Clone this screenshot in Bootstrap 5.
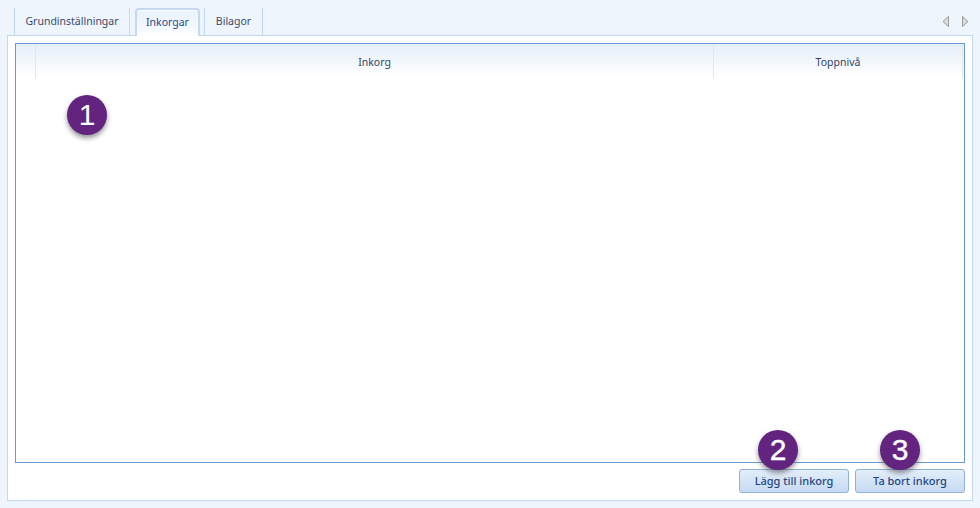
<!doctype html>
<html lang="sv">
<head>
<meta charset="utf-8">
<title>Inkorgar</title>
<link href="https://cdn.jsdelivr.net/npm/bootstrap@5.3.0/dist/css/bootstrap.min.css" rel="stylesheet">
<style>
html,body{height:100%}
body{background:#eef5fd;font-family:"Noto Sans",sans-serif;font-size:11px;color:#2a3a55;overflow:hidden}
.shell{width:980px;height:508px;padding:8px 7px 8px 7px;position:relative}
.tabrow{height:27px;padding-left:7px;padding-right:0;border:0;flex-wrap:nowrap}
.tabrow .nav-link{height:27px;margin:0;padding:0 0 1px;display:flex;align-items:center;justify-content:center;border:0;border-left:1px solid #c3d8f1;border-right:1px solid #c3d8f1;border-radius:0;color:#3a4a6a;background:transparent;font-size:10.5px;line-height:1}
.tabrow .nav-link.active{background:linear-gradient(#fff 0,#eaf2fc 8%,#f3f8fe 70%,#fff 100%);border:2px solid #c3d8f1;border-bottom:0;border-radius:4px 4px 0 0;color:#1f4a8a;position:relative;z-index:2;margin-bottom:-1px;height:28px}
.tab-a{width:116px}
.tab-b{width:65px;margin-left:5px!important}
.tab-c{width:59px;margin-left:4px!important}
.scroller{height:27px;gap:11px;padding-right:4px}
.panel-box{height:466px;background:#fff;border:1px solid #c3d8f1;padding:7px 7px 6px 7px}
.gridbox{height:420px;border:1px solid #6a98d4;background:#fff}
.headcell{height:34px;font-size:10.5px;color:#2f4468;background:linear-gradient(#e6eef9,#fff);padding-top:3px}
.headcell+.headcell{border-left:1px solid #dfe6f0}
.c1{width:19px}
.c2{width:678px}
.c3{width:249px}
.c4{flex:1 1 auto}
.cmd{width:110px;height:24px;padding:0 0 1px;border:1px solid #8fb2d9;border-radius:3px;background:linear-gradient(#e3eefa,#c6daf2);color:#1d4684;font-size:11px;font-weight:500;line-height:1}
.cmd:hover{background:linear-gradient(#e3eefa,#c6daf2);color:#1d4684;border-color:#8fb2d9}
.actions{gap:6px;margin-top:6px}
.pin{position:absolute;width:40px;height:40px;border-radius:50%;background:#62247f;color:#fff;font-family:"Liberation Sans",sans-serif;font-size:30px;line-height:40px;text-align:center;box-shadow:0 3px 5px rgba(60,60,60,.55)}
.pin-1{left:67px;top:95px}
.pin-2{left:758px;top:430px;-webkit-text-stroke:.4px #fff}
.pin-3{left:880px;top:430px;-webkit-text-stroke:.4px #fff}
</style>
</head>
<body>
<div class="shell">
  <div class="d-flex justify-content-between">
    <ul class="nav nav-tabs tabrow">
      <li class="nav-item"><a class="nav-link tab-a" href="#">Grundinställningar</a></li>
      <li class="nav-item"><a class="nav-link tab-b active" href="#">Inkorgar</a></li>
      <li class="nav-item"><a class="nav-link tab-c" href="#">Bilagor</a></li>
    </ul>
    <div class="d-flex align-items-center scroller">
      <svg width="8" height="11" viewBox="0 0 8 11"><path d="M6.5.5v10L1 5.5z" fill="#dcdcdc" stroke="#9a9a9a"/></svg>
      <svg width="8" height="11" viewBox="0 0 8 11"><path d="M1.5.5v10L7 5.5z" fill="#dcdcdc" stroke="#9a9a9a"/></svg>
    </div>
  </div>
  <div class="panel-box">
    <div class="gridbox">
      <div class="d-flex">
        <div class="headcell c1"></div>
        <div class="headcell c2 d-flex align-items-center justify-content-center">Inkorg</div>
        <div class="headcell c3 d-flex align-items-center justify-content-center">Toppnivå</div>
        <div class="headcell c4"></div>
      </div>
    </div>
    <div class="d-flex justify-content-end actions">
      <button type="button" class="btn cmd">Lägg till inkorg</button>
      <button type="button" class="btn cmd">Ta bort inkorg</button>
    </div>
  </div>
  <div class="pin pin-1">1</div>
  <div class="pin pin-2">2</div>
  <div class="pin pin-3">3</div>
</div>
<script src="https://cdn.jsdelivr.net/npm/bootstrap@5.3.0/dist/js/bootstrap.bundle.min.js"></script>
</body>
</html>
